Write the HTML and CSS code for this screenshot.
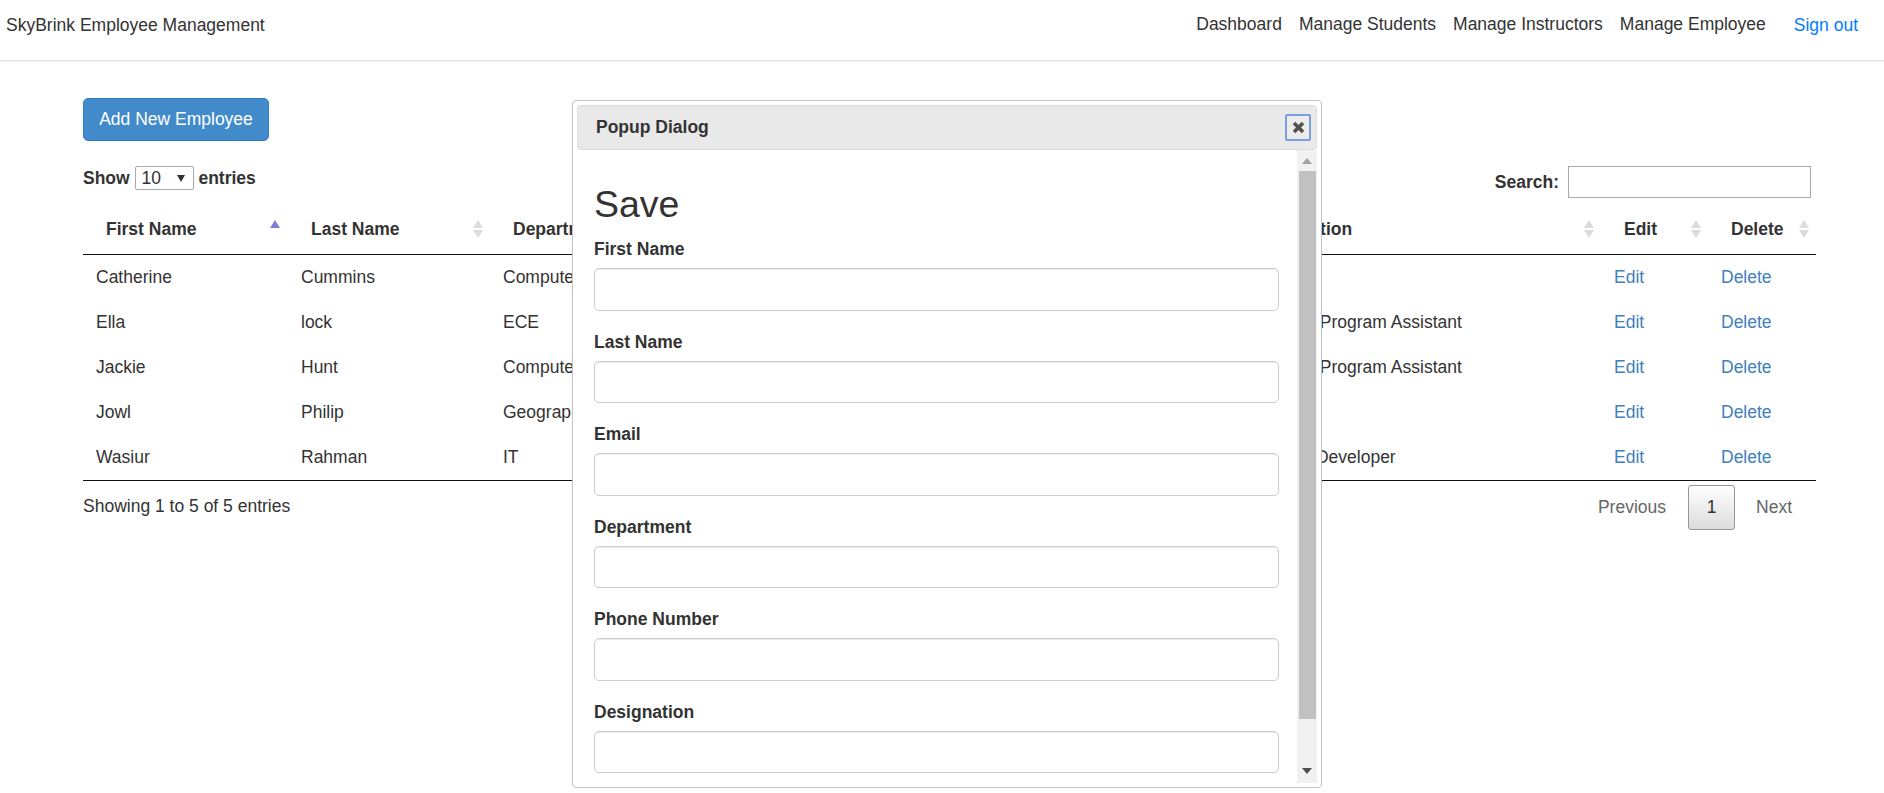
FILE: index.html
```html
<!DOCTYPE html>
<html lang="en">
<head>
  <meta charset="UTF-8">
  <title>SkyBrink Employee Management</title>
  <link rel="stylesheet" href="styles.css">
</head>
<body>
  <nav class="topbar">
    <a class="brand" href="#">SkyBrink Employee Management</a>
    <div class="nav-links">
      <a href="#">Dashboard</a>
      <a href="#">Manage Students</a>
      <a href="#">Manage Instructors</a>
      <a href="#">Manage Employee</a>
    </div>
    <a class="sign-out" href="#">Sign out</a>
  </nav>

  <main class="content">
    <button class="add-btn">Add New Employee</button>

    <div class="table-controls">
      <label class="length-label">Show
        <span class="select-wrap">
          <select>
            <option>10</option>
            <option>25</option>
            <option>50</option>
          </select>
        </span>
        entries</label>
      <label class="search-label">Search: <input type="text"></label>
    </div>

    <table class="employees">
      <thead>
        <tr>
          <th class="col-first sort-asc">First Name</th>
          <th class="col-last sort-both">Last Name</th>
          <th class="col-dept sort-both">Department</th>
          <th class="col-email sort-both">Email</th>
          <th class="col-phone sort-both">Phone Number</th>
          <th class="col-desig sort-both">Designation</th>
          <th class="col-edit sort-both">Edit</th>
          <th class="col-delete sort-both">Delete</th>
        </tr>
      </thead>
      <tbody>
        <tr>
          <td>Catherine</td><td>Cummins</td><td>Computer Science</td>
          <td>catherine@skybrink.edu</td><td>555-0101</td><td>Lecturer</td>
          <td><a href="#">Edit</a></td><td><a href="#">Delete</a></td>
        </tr>
        <tr>
          <td>Ella</td><td>lock</td><td>ECE</td>
          <td>ella@skybrink.edu</td><td>555-0102</td><td>Graduate Program Assistant</td>
          <td><a href="#">Edit</a></td><td><a href="#">Delete</a></td>
        </tr>
        <tr>
          <td>Jackie</td><td>Hunt</td><td>Computer Science</td>
          <td>jackie@skybrink.edu</td><td>555-0103</td><td>Graduate Program Assistant</td>
          <td><a href="#">Edit</a></td><td><a href="#">Delete</a></td>
        </tr>
        <tr>
          <td>Jowl</td><td>Philip</td><td>Geography</td>
          <td>jowl@skybrink.edu</td><td>555-0104</td><td>Professor</td>
          <td><a href="#">Edit</a></td><td><a href="#">Delete</a></td>
        </tr>
        <tr>
          <td>Wasiur</td><td>Rahman</td><td>IT</td>
          <td>wasiur@skybrink.edu</td><td>555-0105</td><td>Software Developer</td>
          <td><a href="#">Edit</a></td><td><a href="#">Delete</a></td>
        </tr>
      </tbody>
    </table>

    <div class="table-footer">
      <span>Showing 1 to 5 of 5 entries</span>
      <div class="pager">
        <a href="#">Previous</a>
        <a class="current" href="#">1</a>
        <a href="#">Next</a>
      </div>
    </div>
  </main>

  <div class="dialog">
    <div class="dialog-title">
      <span>Popup Dialog</span>
      <button class="dialog-close" title="Close">
        <svg width="13" height="13" viewBox="0 0 13 13"><path d="M2 2l9 9M11 2l-9 9" stroke="#505050" stroke-width="3.6" fill="none"/></svg>
      </button>
    </div>
    <div class="dialog-body">
      <form class="dialog-form">
        <h2>Save</h2>
        <div class="field"><label>First Name</label><input type="text"></div>
        <div class="field"><label>Last Name</label><input type="text"></div>
        <div class="field"><label>Email</label><input type="text"></div>
        <div class="field"><label>Department</label><input type="text"></div>
        <div class="field"><label>Phone Number</label><input type="text"></div>
        <div class="field"><label>Designation</label><input type="text"></div>
      </form>
      <div class="scrollbar">
        <span class="arrow-up"></span>
        <span class="thumb"></span>
        <span class="arrow-down"></span>
      </div>
    </div>
  </div>
</body>
</html>
```

FILE: styles.css
```css
html, body {
  height: 100%;
}

body {
  margin: 0;
  overflow: hidden;
  background-color: #fff;
  color: #333;
  font-family: "Liberation Sans", Arial, sans-serif;
  font-size: 17.5px;
  line-height: 25px;
}

a {
  color: #3f80bd;
  text-decoration: none;
}

/* top bar */
.topbar {
  display: flex;
  align-items: center;
  height: 50px;
  padding: 0 26px 10px 6px;
  border-bottom: 1px solid #e2e2e2;
  box-shadow: 0 1px 2px rgba(0, 0, 0, 0.06);
}

.brand {
  color: #333;
  margin-right: auto;
}

.nav-links {
  display: flex;
  gap: 17px;
  margin-bottom: 2px;
}

.nav-links a {
  color: #333;
}

.sign-out {
  margin-left: 28px;
  color: #007bff;
}

/* main area */
.content {
  padding: 37px 67px 0 83px;
}

.add-btn {
  display: block;
  width: 186px;
  height: 43px;
  padding: 0;
  border: 1px solid #357ebd;
  border-radius: 5px;
  background-color: #428bca;
  color: #fff;
  font: inherit;
}

.table-controls {
  display: flex;
  justify-content: space-between;
  align-items: flex-start;
  height: 43px;
  margin-top: 25px;
  font-weight: bold;
}

.select-wrap {
  position: relative;
  display: inline-block;
  vertical-align: top;
}

.select-wrap select {
  display: block;
  width: 59px;
  height: 24px;
  padding: 0 0 0 6px;
  border: 1px solid #a9a9a9;
  border-radius: 2px;
  background: #fff;
  color: #333;
  font: 17.5px "Liberation Sans", Arial, sans-serif;
  appearance: none;
}

.select-wrap::after {
  content: "";
  position: absolute;
  top: 9px;
  right: 9px;
  border-left: 4px solid transparent;
  border-right: 4px solid transparent;
  border-top: 7px solid #333;
}

.search-label {
  display: flex;
  align-items: center;
  gap: 9px;
  margin-right: 6px;
}

.search-label input {
  width: 243px;
  height: 32px;
  padding: 0 4px;
  border: 1px solid #a9a9a9;
  box-sizing: border-box;
}

/* table */
.employees {
  width: 1733px;
  table-layout: fixed;
  border-collapse: separate;
  border-spacing: 0;
  border-bottom: 1px solid #111;
}

.employees th {
  position: relative;
  height: 46px;
  padding: 0 23px 5px;
  border-bottom: 1px solid #111;
  box-sizing: border-box;
  text-align: left;
  white-space: nowrap;
}

.employees td {
  height: 45px;
  padding: 0 13px;
  box-sizing: border-box;
  white-space: nowrap;
}

.col-first { width: 205px; }
.col-last { width: 202px; }
.col-dept { width: 200px; }
.col-email { width: 330px; }
.col-phone { width: 209px; }
.col-desig { width: 372px; }
.col-edit { width: 107px; }
.col-delete { width: 108px; }

/* sort arrows */
.sort-asc::before,
.sort-both::before,
.sort-both::after {
  content: "";
  position: absolute;
  right: 7px;
  border-left: 5px solid transparent;
  border-right: 5px solid transparent;
}

.sort-asc::before {
  top: 11px;
  right: 8px;
  border-bottom: 8px solid #7b7fd4;
}

.sort-both::before {
  top: 11px;
  border-bottom: 8px solid #dcdcdc;
}

.sort-both::after {
  top: 21px;
  border-top: 8px solid #dcdcdc;
}

.table-footer {
  display: flex;
  justify-content: space-between;
  align-items: flex-start;
  padding-top: 13px;
}

.pager {
  display: flex;
  align-items: center;
  height: 45px;
  margin-top: -9px;
  padding-right: 25px;
  gap: 22px;
}

.pager a {
  color: #666;
}

.pager .current {
  width: 47px;
  height: 45px;
  margin: 0 -1px 0 0;
  border: 1px solid #979797;
  border-radius: 3px;
  box-sizing: border-box;
  background: linear-gradient(to bottom, #fff 0%, #dcdcdc 100%);
  color: #333;
  line-height: 43px;
  text-align: center;
}

/* popup */
.dialog {
  position: absolute;
  left: 572px;
  top: 100px;
  display: flex;
  flex-direction: column;
  width: 750px;
  height: 688px;
  padding: 4px;
  border: 1px solid #c5c5c5;
  border-radius: 4px;
  box-sizing: border-box;
  background-color: #fff;
}

.dialog-title {
  display: flex;
  justify-content: space-between;
  align-items: center;
  flex: none;
  height: 45px;
  padding: 0 5px 0 18px;
  border: 1px solid #ddd;
  border-radius: 4px;
  box-sizing: border-box;
  background-color: #e9e9e9;
  font-weight: bold;
}

.dialog-close {
  display: flex;
  align-items: center;
  justify-content: center;
  width: 26px;
  height: 27px;
  padding: 0;
  border: 2px solid #7a9fe0;
  border-radius: 2px;
  background-color: #ececec;
}

.dialog-body {
  display: flex;
  flex: 1;
  min-height: 0;
}

.dialog-form {
  flex: 1;
  padding: 34px 18px 0 17px;
  overflow: hidden;
}

.dialog-form h2 {
  margin: 0 0 12px;
  font-size: 37.5px;
  font-weight: normal;
  line-height: 41px;
}

.field {
  margin-bottom: 18.75px;
}

.field label {
  display: block;
  margin-bottom: 6.25px;
  font-weight: bold;
}

.field input {
  display: block;
  width: 100%;
  height: 42.5px;
  padding: 0 15px;
  border: 1px solid #ccc;
  border-radius: 5px;
  box-sizing: border-box;
  box-shadow: inset 0 1px 1px rgba(0, 0, 0, 0.075);
}

/* scrollbar of the popup */
.scrollbar {
  display: flex;
  flex-direction: column;
  align-items: center;
  flex: none;
  width: 20px;
  background-color: #f1f1f1;
}

.arrow-up {
  margin-top: 8px;
  border-left: 5px solid transparent;
  border-right: 5px solid transparent;
  border-bottom: 6px solid #a3a3a3;
}

.thumb {
  width: 17px;
  height: 548px;
  margin-top: 7px;
  background-color: #c1c1c1;
}

.arrow-down {
  margin-top: 49px;
  border-left: 5px solid transparent;
  border-right: 5px solid transparent;
  border-top: 6px solid #505050;
}
```
